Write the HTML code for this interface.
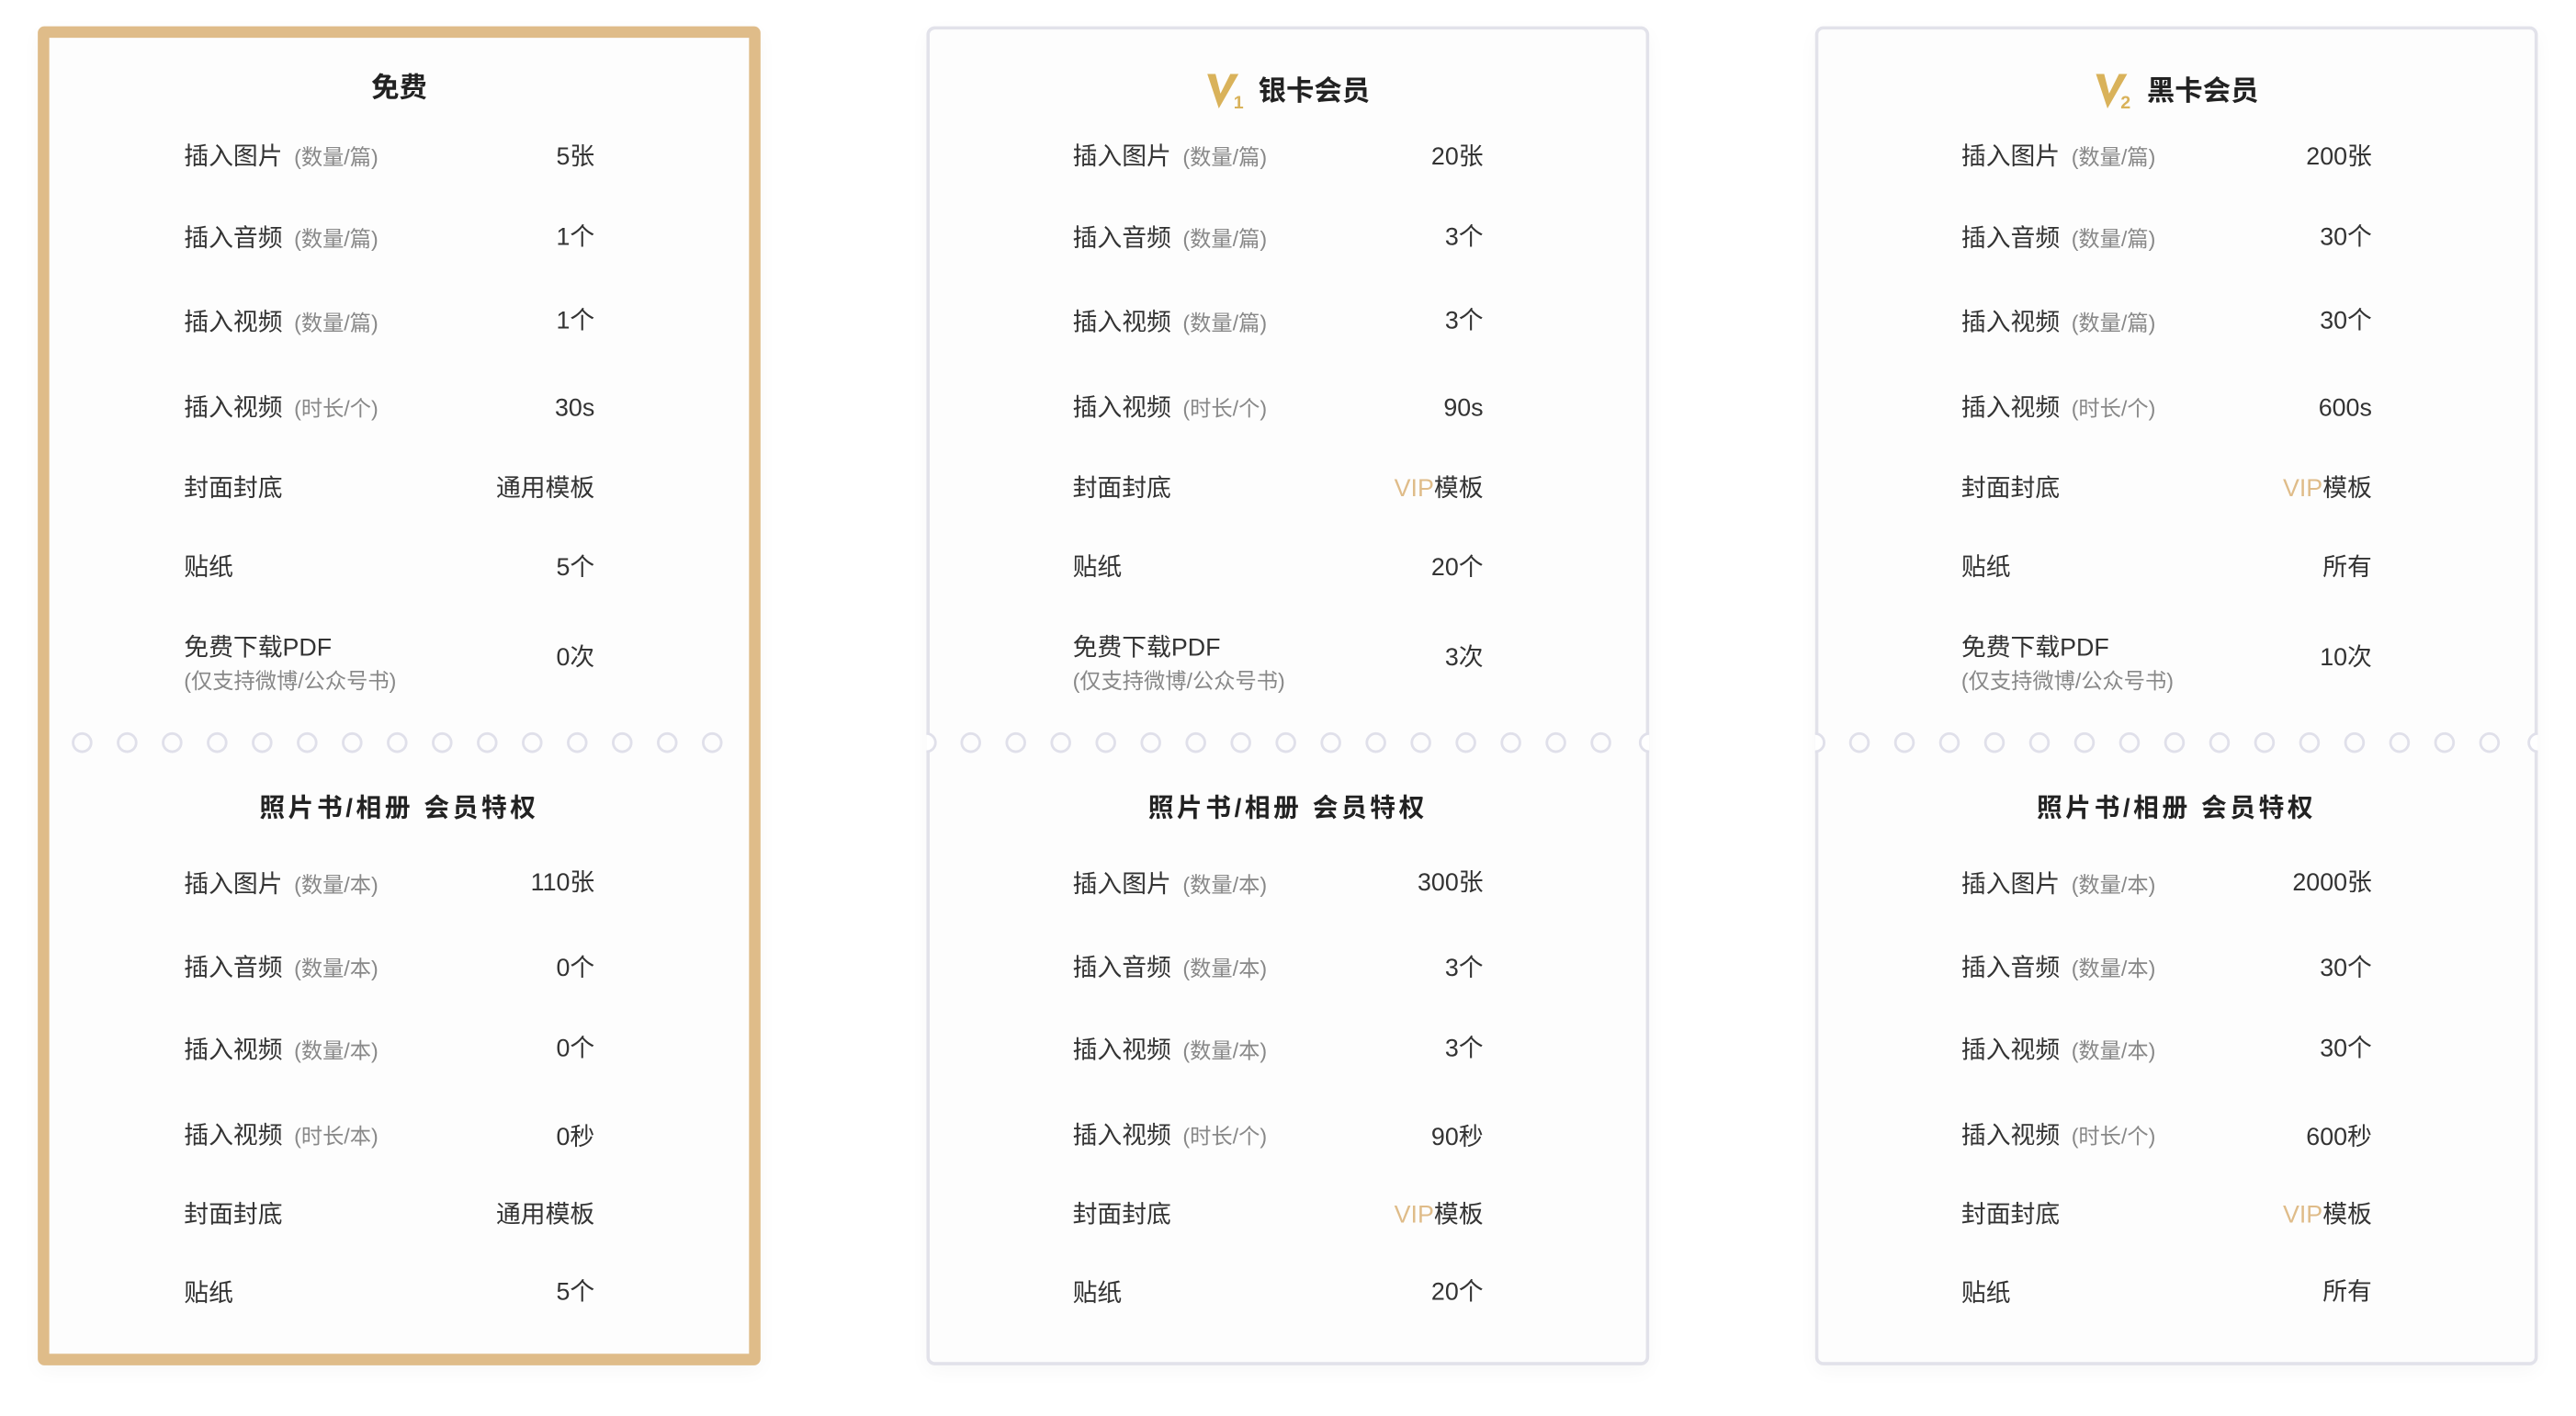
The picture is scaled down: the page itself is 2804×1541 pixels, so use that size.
<!DOCTYPE html>
<html><head><meta charset="utf-8"><style>
html,body{margin:0;padding:0;background:#fff;}
body{width:2804px;height:1540px;overflow:hidden;}
#w{position:absolute;left:0;top:0;width:1568px;height:862px;transform:scale(1.788);transform-origin:0 0;font-family:"Liberation Sans","Noto Sans CJK SC",sans-serif;color:#333;}
.card{position:absolute;top:16px;width:440px;height:815px;box-sizing:border-box;background:#fdfdfd;border-radius:5px;border:2px solid #e2e2ea;box-shadow:0 4px 12px rgba(0,0,0,0.03);}
.gold{border:7px solid #dfbc89;border-radius:4px;}
.in{position:absolute;left:0;top:0;width:440px;height:815px;}
.gold .in{left:-7px;top:-21px;}
.card:not(.gold) .in{left:-2px;top:-16px;}
.t{position:absolute;left:0;width:440px;text-align:center;font-size:17px;font-weight:bold;color:#222;line-height:20px;}
.t2{letter-spacing:2px;font-size:15.5px;}
.r{position:absolute;left:89px;font-size:15px;line-height:18px;white-space:nowrap;}
.r small{font-size:13px;color:#888;margin-left:7px;}
.s{position:absolute;left:89px;font-size:13px;color:#888;line-height:16px;white-space:nowrap;}
.v{position:absolute;right:101px;font-size:15px;line-height:18px;text-align:right;white-space:nowrap;}
.v b{font-weight:normal;color:#dfbc89;}
.dots{position:absolute;left:0;top:442px;}
svg.vi{display:inline-block;vertical-align:-5px;margin-right:8px;}
</style></head><body><div id="w">

<div class="card gold" style="left:23px;"><div class="in">
<div class="t" style="top:42px;">免费</div>
<div class="r" style="top:85px;">插入图片<small>(数量/篇)</small></div><div class="v" style="top:85px;">5张</div>
<div class="r" style="top:135px;">插入音频<small>(数量/篇)</small></div><div class="v" style="top:134px;">1个</div>
<div class="r" style="top:186px;">插入视频<small>(数量/篇)</small></div><div class="v" style="top:185px;">1个</div>
<div class="r" style="top:238px;">插入视频<small>(时长/个)</small></div><div class="v" style="top:238px;">30s</div>
<div class="r" style="top:287px;">封面封底</div><div class="v" style="top:287px;">通用模板</div>
<div class="r" style="top:335px;">贴纸</div><div class="v" style="top:335px;">5个</div>
<div class="r" style="top:384px;">免费下载PDF</div><div class="s" style="top:405px;">(仅支持微博/公众号书)</div><div class="v" style="top:390px;">0次</div>
<svg class="dots" width="440" height="16"><g fill="none" stroke="#e0e0ea" stroke-width="1.6"><circle cx="27" cy="8" r="5.5"/><circle cx="54.4" cy="8" r="5.5"/><circle cx="81.8" cy="8" r="5.5"/><circle cx="109.2" cy="8" r="5.5"/><circle cx="136.6" cy="8" r="5.5"/><circle cx="164" cy="8" r="5.5"/><circle cx="191.4" cy="8" r="5.5"/><circle cx="218.8" cy="8" r="5.5"/><circle cx="246.2" cy="8" r="5.5"/><circle cx="273.6" cy="8" r="5.5"/><circle cx="301" cy="8" r="5.5"/><circle cx="328.4" cy="8" r="5.5"/><circle cx="355.8" cy="8" r="5.5"/><circle cx="383.2" cy="8" r="5.5"/><circle cx="410.6" cy="8" r="5.5"/></g></svg>
<div class="t t2" style="top:481px;">照片书/相册 会员特权</div>
<div class="r" style="top:528px;">插入图片<small>(数量/本)</small></div><div class="v" style="top:527px;">110张</div>
<div class="r" style="top:579px;">插入音频<small>(数量/本)</small></div><div class="v" style="top:579px;">0个</div>
<div class="r" style="top:629px;">插入视频<small>(数量/本)</small></div><div class="v" style="top:628px;">0个</div>
<div class="r" style="top:681px;">插入视频<small>(时长/本)</small></div><div class="v" style="top:682px;">0秒</div>
<div class="r" style="top:729px;">封面封底</div><div class="v" style="top:729px;">通用模板</div>
<div class="r" style="top:777px;">贴纸</div><div class="v" style="top:776px;">5个</div>
</div></div>

<div class="card" style="left:564px;"><div class="in">
<div class="t" style="top:42px;"><svg class="vi" width="24" height="22" viewBox="0 0 24 22"><path d="M1 1h5l3 12 6-12h5L8 22z" fill="#d9b25a"/><text x="17" y="22" font-size="11" fill="#d9b25a" font-family="Liberation Sans">1</text></svg>银卡会员</div>
<div class="r" style="top:85px;">插入图片<small>(数量/篇)</small></div><div class="v" style="top:85px;">20张</div>
<div class="r" style="top:135px;">插入音频<small>(数量/篇)</small></div><div class="v" style="top:134px;">3个</div>
<div class="r" style="top:186px;">插入视频<small>(数量/篇)</small></div><div class="v" style="top:185px;">3个</div>
<div class="r" style="top:238px;">插入视频<small>(时长/个)</small></div><div class="v" style="top:238px;">90s</div>
<div class="r" style="top:287px;">封面封底</div><div class="v" style="top:287px;"><b>VIP</b>模板</div>
<div class="r" style="top:335px;">贴纸</div><div class="v" style="top:335px;">20个</div>
<div class="r" style="top:384px;">免费下载PDF</div><div class="s" style="top:405px;">(仅支持微博/公众号书)</div><div class="v" style="top:390px;">3次</div>
<svg class="dots" width="440" height="16"><g fill="#fff" stroke="#e0e0ea" stroke-width="1.6"><circle cx="0" cy="8" r="5.5"/><circle cx="440" cy="8" r="5.5"/></g><g fill="none" stroke="#e0e0ea" stroke-width="1.6"><circle cx="27" cy="8" r="5.5"/><circle cx="54.4" cy="8" r="5.5"/><circle cx="81.8" cy="8" r="5.5"/><circle cx="109.2" cy="8" r="5.5"/><circle cx="136.6" cy="8" r="5.5"/><circle cx="164" cy="8" r="5.5"/><circle cx="191.4" cy="8" r="5.5"/><circle cx="218.8" cy="8" r="5.5"/><circle cx="246.2" cy="8" r="5.5"/><circle cx="273.6" cy="8" r="5.5"/><circle cx="301" cy="8" r="5.5"/><circle cx="328.4" cy="8" r="5.5"/><circle cx="355.8" cy="8" r="5.5"/><circle cx="383.2" cy="8" r="5.5"/><circle cx="410.6" cy="8" r="5.5"/></g></svg>
<div class="t t2" style="top:481px;">照片书/相册 会员特权</div>
<div class="r" style="top:528px;">插入图片<small>(数量/本)</small></div><div class="v" style="top:527px;">300张</div>
<div class="r" style="top:579px;">插入音频<small>(数量/本)</small></div><div class="v" style="top:579px;">3个</div>
<div class="r" style="top:629px;">插入视频<small>(数量/本)</small></div><div class="v" style="top:628px;">3个</div>
<div class="r" style="top:681px;">插入视频<small>(时长/个)</small></div><div class="v" style="top:682px;">90秒</div>
<div class="r" style="top:729px;">封面封底</div><div class="v" style="top:729px;"><b>VIP</b>模板</div>
<div class="r" style="top:777px;">贴纸</div><div class="v" style="top:776px;">20个</div>
</div></div>

<div class="card" style="left:1105px;"><div class="in">
<div class="t" style="top:42px;"><svg class="vi" width="24" height="22" viewBox="0 0 24 22"><path d="M1 1h5l3 12 6-12h5L8 22z" fill="#d9b25a"/><text x="16" y="22" font-size="11" fill="#d9b25a" font-family="Liberation Sans">2</text></svg>黑卡会员</div>
<div class="r" style="top:85px;">插入图片<small>(数量/篇)</small></div><div class="v" style="top:85px;">200张</div>
<div class="r" style="top:135px;">插入音频<small>(数量/篇)</small></div><div class="v" style="top:134px;">30个</div>
<div class="r" style="top:186px;">插入视频<small>(数量/篇)</small></div><div class="v" style="top:185px;">30个</div>
<div class="r" style="top:238px;">插入视频<small>(时长/个)</small></div><div class="v" style="top:238px;">600s</div>
<div class="r" style="top:287px;">封面封底</div><div class="v" style="top:287px;"><b>VIP</b>模板</div>
<div class="r" style="top:335px;">贴纸</div><div class="v" style="top:335px;">所有</div>
<div class="r" style="top:384px;">免费下载PDF</div><div class="s" style="top:405px;">(仅支持微博/公众号书)</div><div class="v" style="top:390px;">10次</div>
<svg class="dots" width="440" height="16"><g fill="#fff" stroke="#e0e0ea" stroke-width="1.6"><circle cx="0" cy="8" r="5.5"/><circle cx="440" cy="8" r="5.5"/></g><g fill="none" stroke="#e0e0ea" stroke-width="1.6"><circle cx="27" cy="8" r="5.5"/><circle cx="54.4" cy="8" r="5.5"/><circle cx="81.8" cy="8" r="5.5"/><circle cx="109.2" cy="8" r="5.5"/><circle cx="136.6" cy="8" r="5.5"/><circle cx="164" cy="8" r="5.5"/><circle cx="191.4" cy="8" r="5.5"/><circle cx="218.8" cy="8" r="5.5"/><circle cx="246.2" cy="8" r="5.5"/><circle cx="273.6" cy="8" r="5.5"/><circle cx="301" cy="8" r="5.5"/><circle cx="328.4" cy="8" r="5.5"/><circle cx="355.8" cy="8" r="5.5"/><circle cx="383.2" cy="8" r="5.5"/><circle cx="410.6" cy="8" r="5.5"/></g></svg>
<div class="t t2" style="top:481px;">照片书/相册 会员特权</div>
<div class="r" style="top:528px;">插入图片<small>(数量/本)</small></div><div class="v" style="top:527px;">2000张</div>
<div class="r" style="top:579px;">插入音频<small>(数量/本)</small></div><div class="v" style="top:579px;">30个</div>
<div class="r" style="top:629px;">插入视频<small>(数量/本)</small></div><div class="v" style="top:628px;">30个</div>
<div class="r" style="top:681px;">插入视频<small>(时长/个)</small></div><div class="v" style="top:682px;">600秒</div>
<div class="r" style="top:729px;">封面封底</div><div class="v" style="top:729px;"><b>VIP</b>模板</div>
<div class="r" style="top:777px;">贴纸</div><div class="v" style="top:776px;">所有</div>
</div></div>

</div></body></html>
